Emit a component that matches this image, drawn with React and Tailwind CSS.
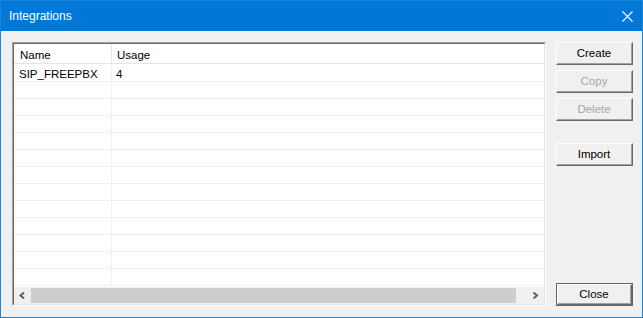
import React from 'react';

const font = { fontFamily: '"Liberation Sans", Arial, sans-serif' };

function Button({ label, disabled, isDefault }) {
  const face = (
    <div className="flex-1 flex border-t border-l border-t-white border-l-white border-r border-b border-r-[#696969] border-b-[#696969]">
      <div className="flex-1 flex items-center justify-center border-r border-b border-r-[#a0a0a0] border-b-[#a0a0a0] bg-[#f0f0f0]">
        <span className={`text-[11.5px] leading-[13px] ${disabled ? 'text-[#a7a7a7]' : 'text-black'}`}>
          {label}
        </span>
      </div>
    </div>
  );

  if (isDefault) {
    return <div className="h-[23px] w-[77px] flex border border-[#646464]">{face}</div>;
  }
  return <div className="h-[23px] w-[77px] flex">{face}</div>;
}

function Chevron({ dir }) {
  const d = dir === 'left' ? 'M5 0.5 L1.5 3.5 L5 6.5' : 'M1.5 0.5 L5 3.5 L1.5 6.5';
  return (
    <svg width="7" height="7" viewBox="0 0 7 7">
      <path d={d} fill="none" stroke="#606060" strokeWidth="2" />
    </svg>
  );
}

export default function App() {
  const rows = [{ name: 'SIP_FREEPBX', usage: '4' }];
  // empty rows to fill the list area
  for (let i = 0; i < 12; i++) rows.push({ name: '', usage: '' });

  return (
    <div
      style={font}
      className="w-[643px] h-[318px] flex flex-col border border-[#1883d7] bg-[#f0f0f0] overflow-hidden"
    >
      {/* Title bar */}
      <div className="h-[30px] shrink-0 bg-[#0078d7] flex items-center justify-between">
        <span className="pl-[8px] text-white text-[12px]">Integrations</span>
        <svg width="11" height="11" viewBox="0 0 11 11" className="mr-[9px]">
          <path d="M0.5 0.5 L10.5 10.5 M10.5 0.5 L0.5 10.5" stroke="white" strokeWidth="1.1" fill="none" />
        </svg>
      </div>

      {/* Body */}
      <div className="flex-1 flex pt-[11px] pl-[11px] pr-[9px] pb-[11px] gap-[10px]">
        {/* List view */}
        <div className="w-[534px] h-[264px] flex border-t border-l border-t-[#a0a0a0] border-l-[#a0a0a0] border-r border-b border-r-white border-b-white">
          <div className="flex-1 flex flex-col bg-white border-t border-l border-t-[#696969] border-l-[#696969] border-r border-b border-r-[#e3e3e3] border-b-[#e3e3e3] overflow-hidden">
            {/* Header */}
            <div className="h-[20px] shrink-0 flex border-b border-[#e5e5e5] text-[11.5px] leading-[13px] text-black">
              <div className="w-[98px] pl-[6px] pt-[5px] border-r border-[#e5e5e5]">Name</div>
              <div className="flex-1 pl-[5px] pt-[5px]">Usage</div>
            </div>

            {/* Rows */}
            <div className="flex-1 overflow-hidden">
              {rows.map((r, i) => (
                <div
                  key={i}
                  className={`${i === 0 ? 'h-[18px]' : 'h-[17px]'} flex border-b border-[#f0f0f0] text-[11.5px] leading-[13px] text-black`}
                >
                  <div className="w-[98px] pl-[5px] pt-[4px] border-r border-[#f0f0f0]">{r.name}</div>
                  <div className="flex-1 pl-[4px] pt-[4px]">{r.usage}</div>
                </div>
              ))}
            </div>

            {/* Horizontal scrollbar */}
            <div className="h-[17px] shrink-0 flex bg-[#f0f0f0]">
              <div className="w-[17px] flex items-center justify-center">
                <Chevron dir="left" />
              </div>
              <div className="flex-1 flex items-center">
                <div className="w-[485px] h-[15px] bg-[#cdcdcd]" />
              </div>
              <div className="w-[17px] flex items-center justify-center">
                <Chevron dir="right" />
              </div>
            </div>
          </div>
        </div>

        {/* Buttons */}
        <div className="w-[77px] flex flex-col">
          <Button label="Create" />
          <div className="mt-[5px]">
            <Button label="Copy" disabled />
          </div>
          <div className="mt-[5px]">
            <Button label="Delete" disabled />
          </div>
          <div className="mt-[22px]">
            <Button label="Import" />
          </div>
          <div className="mt-auto">
            <Button label="Close" isDefault />
          </div>
        </div>
      </div>
    </div>
  );
}
